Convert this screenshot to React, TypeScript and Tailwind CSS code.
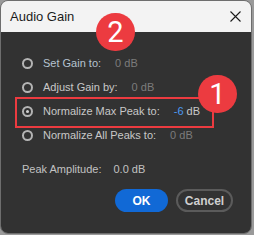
import React from 'react';

const font = { fontFamily: '"Liberation Sans", Arial, sans-serif' };

function Radio({ checked }: { checked?: boolean }) {
  return (
    <span className="flex h-[11px] w-[11px] shrink-0 items-center justify-center rounded-full border-2 border-[#b4b4b4]">
      {checked && <span className="h-[3px] w-[3px] rounded-full bg-[#d0d0d0]" />}
    </span>
  );
}

function Option({
  label,
  value,
  checked,
  labelClass = 'text-[#c8c8c8]',
}: {
  label: string;
  value: React.ReactNode;
  checked?: boolean;
  labelClass?: string;
}) {
  return (
    <div className="flex h-[24px] items-center">
      <Radio checked={checked} />
      <span className={`ml-[10px] ${labelClass}`}>{label}</span>
      <span className="ml-[14px] text-[#7c7c7c]">{value}</span>
    </div>
  );
}

function Badge({ n, className }: { n: number; className: string }) {
  return (
    <div
      className={`absolute flex h-[38px] w-[39px] items-center justify-center rounded-full bg-[#ec3b40] text-[29px] leading-none text-white ${className}`}
      style={{ fontFamily: 'Roboto, sans-serif' }}
    >
      {n}
    </div>
  );
}

export default function App() {
  return (
    <div className="relative h-[235px] w-[254px] bg-[#9a9a9a]" style={font}>
      <div className="flex h-[234px] w-[252px] flex-col overflow-hidden rounded-lg border border-[#6e6e6e]">
        <div className="flex h-[31px] shrink-0 items-center justify-between bg-[#f3f3f3] pl-[9px] pr-[9px] text-[13px] text-[#1b1b1b]">
          <span>Audio Gain</span>
          <svg width="11" height="11" viewBox="0 0 11 11" className="mr-[1px]">
            <path d="M0.5 0.5 L10.5 10.5 M10.5 0.5 L0.5 10.5" stroke="#1b1b1b" strokeWidth="1.1" />
          </svg>
        </div>
        <div className="flex flex-1 flex-col bg-[#323232] pl-[21px] pr-[18px] pt-[19px] text-[11px]">
          <Option label="Set Gain to:" value="0 dB" labelClass="text-[#b6c3d0]" />
          <Option label="Adjust Gain by:" value="0 dB" />
          <Option
            label="Normalize Max Peak to:"
            checked
            value={
              <span className="text-[#c8c8c8]">
                <span className="text-[#4b9af2]">-6</span> dB
              </span>
            }
          />
          <Option label="Normalize All Peaks to:" value="0 dB" />
          <div className="mt-[10px] flex h-[24px] items-center text-[#c2c2c2]">
            <span>Peak Amplitude:</span>
            <span className="ml-[12px]">0.0 dB</span>
          </div>
          <div className="mt-[8px] flex justify-end gap-[8px] text-[12px] font-bold">
            <button className="h-[23px] w-[53px] rounded-full bg-[#1169d6] text-white">OK</button>
            <button className="h-[23px] w-[57px] rounded-full border-2 border-[#5b5b5b] text-[#cfcfcf]">
              Cancel
            </button>
          </div>
        </div>
      </div>
      <div className="absolute left-[15px] top-[97px] h-[31px] w-[199px] border-2 border-[#ec3b40]" />
      <Badge n={2} className="left-[96px] top-[13px]" />
      <Badge n={1} className="left-[198px] top-[75px]" />
    </div>
  );
}
